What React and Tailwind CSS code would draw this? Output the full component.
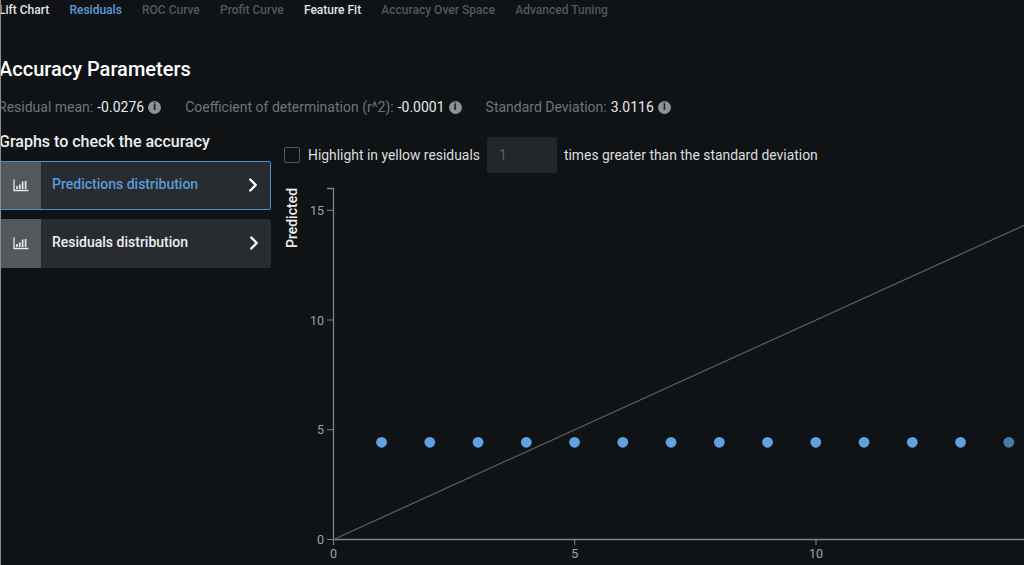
import { ChevronRight } from "lucide-react"

const tabs = [
  { label: "Lift Chart", color: "text-[#e4e5e6]" },
  { label: "Residuals", color: "text-[#5b9bd8]" },
  { label: "ROC Curve", color: "text-[#53575b]" },
  { label: "Profit Curve", color: "text-[#53575b]" },
  { label: "Feature Fit", color: "text-[#e4e5e6]" },
  { label: "Accuracy Over Space", color: "text-[#53575b]" },
  { label: "Advanced Tuning", color: "text-[#53575b]" },
]

const params = [
  { label: "Residual mean:", value: "-0.0276" },
  { label: "Coefficient of determination (r^2):", value: "-0.0001" },
  { label: "Standard Deviation:", value: "3.0116" },
]

function InfoDot() {
  return (
    <span className="ml-[4px] flex h-[13px] w-[13px] items-center justify-center rounded-full bg-[#8f9194]">
      <span className="text-[10px] leading-none font-bold text-[#101316]">i</span>
    </span>
  )
}

function BarsIcon() {
  return (
    <svg width="16" height="13" viewBox="0 0 16 13" fill="none" stroke="#e8e8e8">
      <path d="M1 0.5V11.5H15.5" strokeWidth="1.3" />
      <path d="M4 10V7M6.8 10V5.5M9.6 10V2.5M12.6 10V2" strokeWidth="1.7" />
    </svg>
  )
}

function GraphButton({ label, active }) {
  return (
    <div
      className={`flex h-[49px] w-[271px] items-stretch overflow-hidden rounded-r-[2px] bg-[#282b30] ${
        active ? "border border-l-0 border-[#4f8fcc]" : ""
      }`}
    >
      <div className="flex w-[41px] items-center justify-center bg-[#54585b]">
        <BarsIcon />
      </div>
      <span
        className={`ml-[11px] flex-1 self-center pb-[3px] text-sm font-medium ${
          active ? "text-[#5b9bd8]" : "text-[#eeeeee]"
        }`}
      >
        {label}
      </span>
      <ChevronRight className="mr-[6px] mb-[2px] self-center text-white" size={22} strokeWidth={2.6} />
    </div>
  )
}

function Chart() {
  const dots = Array.from({ length: 14 }, (_, i) => i + 1)
  const xAt = (v) => 333.5 + v * 48.25
  const yAt = (v) => 539.5 - v * 21.95
  const top = 185

  return (
    <svg width="744" height="380" viewBox={`280 ${top} 744 380`} className="block" fontFamily="Roboto, sans-serif">
      <text x="0" y="0" fill="#f0f0f0" fontSize="14" fontWeight="500" textAnchor="middle" transform="translate(297 218) rotate(-90)">
        Predicted
      </text>

      <path d="M333.5 188.5H327M333.5 188V539.5H1024" stroke="#808284" strokeWidth="1.3" fill="none" />
      {[0, 5, 10, 15].map((v) => (
        <g key={v}>
          <path d={`M327 ${yAt(v)}H333.5`} stroke="#808284" strokeWidth="1" />
          <text x="324" y={yAt(v) + 4.5} fill="#a0a2a4" fontSize="12.5" textAnchor="end">
            {v}
          </text>
        </g>
      ))}
      {[0, 5, 10].map((v) => (
        <g key={v}>
          <path d={`M${xAt(v)} 539.5V545`} stroke="#808284" strokeWidth="1" />
          <text x={xAt(v)} y="557.5" fill="#a0a2a4" fontSize="12.5" textAnchor="middle">
            {v}
          </text>
        </g>
      ))}

      <path d={`M333.5 539.5L1024 ${539.5 - 14.31 * 21.95}`} stroke="#5f6163" strokeWidth="1.2" />

      {dots.map((v) => (
        <circle key={v} cx={xAt(v) - 0.2} cy="442.3" r="5.4" fill={v === 14 ? "#4a7ba8" : "#62a1e0"} />
      ))}
    </svg>
  )
}

export default function App() {
  return (
    <div
      className="relative h-[565px] w-[1024px] overflow-hidden bg-[#101316]"
      style={{ fontFamily: "Roboto, sans-serif" }}
    >
      <div className="absolute inset-y-0 left-0 w-px bg-[#8a8b8c]" />

      <nav className="-ml-px flex h-[20px] items-center gap-[20.2px] text-xs font-medium">
        {tabs.map((tab) => (
          <span key={tab.label} className={tab.color}>
            {tab.label}
          </span>
        ))}
      </nav>

      <h1 className="mt-[37px] -ml-px text-xl leading-[24px] font-medium text-white">Accuracy Parameters</h1>

      <div className="mt-[16px] -ml-[2px] flex h-[20px] items-center gap-[24px] text-sm">
        {params.map((p) => (
          <div key={p.label} className="flex items-center">
            <span className="text-[#717376]">{p.label}</span>
            <span className="ml-[4px] text-[#e8e8e8]">{p.value}</span>
            <InfoDot />
          </div>
        ))}
      </div>

      <div className="mt-[15px] w-[284px]">
        <h2 className="-ml-px text-base leading-[20px] font-medium text-[#eeeeee]">Graphs to check the accuracy</h2>
        <div className="mt-[9px] flex flex-col gap-[9px]">
          <GraphButton label="Predictions distribution" active />
          <GraphButton label="Residuals distribution" />
        </div>
      </div>

      <div className="absolute top-[137px] left-[284px] flex h-[36px] items-center text-[13.9px] text-[#dddddd]">
        <span className="h-[16px] w-[16px] rounded-[2px] border border-[#55585b]" />
        <span className="ml-[8px]">Highlight in yellow residuals</span>
        <span className="ml-[7px] flex h-[36px] w-[70px] items-center rounded-[2px] bg-[#22252a] pl-[12px] text-[#5c5f62]">1</span>
        <span className="ml-[7px]">times greater than the standard deviation</span>
      </div>

      <div className="absolute top-[185px] left-[280px]">
        <Chart />
      </div>
    </div>
  )
}
